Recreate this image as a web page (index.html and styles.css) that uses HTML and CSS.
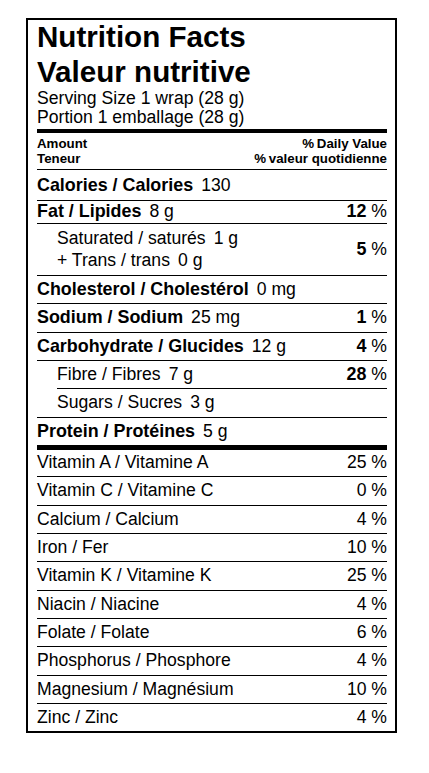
FILE: index.html
```html
<!DOCTYPE html>
<html lang="en">
<head>
  <meta charset="UTF-8">
  <title>Nutrition Facts - Valeur nutritive</title>
  <link rel="stylesheet" href="styles.css">
</head>
<body>

  <!-- Nutrition Facts table -->
  <div class="label">

    <!-- Title & serving -->
    <div class="head">
      <h1>Nutrition Facts<br>Valeur nutritive</h1>
      <p class="serving">Serving Size 1 wrap (28 g)<br>Portion 1 emballage (28 g)</p>
    </div>

    <div class="colhead">
      <div>Amount<br>Teneur</div>
      <div class="right">%&thinsp;Daily Value<br>%&thinsp;valeur quotidienne</div>
    </div>

    <!-- Nutrients -->
    <div class="row calories">
      <span><b>Calories / Calories</b><span class="amt">130</span></span>
    </div>
    <div class="row fat">
      <span><b>Fat / Lipides</b><span class="amt">8 g</span></span>
      <span class="dv"><b>12</b> %</span>
    </div>
    <div class="row sub double">
      <span>Saturated / saturés<span class="amt">1 g</span><br>+ Trans / trans<span class="amt">0 g</span></span>
      <span class="dv"><b>5</b> %</span>
    </div>
    <div class="row">
      <span><b>Cholesterol / Cholestérol</b><span class="amt">0 mg</span></span>
    </div>
    <div class="row">
      <span><b>Sodium / Sodium</b><span class="amt">25 mg</span></span>
      <span class="dv"><b>1</b> %</span>
    </div>
    <div class="row">
      <span><b>Carbohydrate / Glucides</b><span class="amt">12 g</span></span>
      <span class="dv"><b>4</b> %</span>
    </div>
    <div class="row sub">
      <span>Fibre / Fibres<span class="amt">7 g</span></span>
      <span class="dv"><b>28</b> %</span>
    </div>
    <div class="row sub nested">
      <span>Sugars / Sucres<span class="amt">3 g</span></span>
    </div>
    <div class="row">
      <span><b>Protein / Protéines</b><span class="amt">5 g</span></span>
    </div>

    <!-- Vitamins & minerals -->
    <div class="vitamins">
      <div class="row"><span>Vitamin A / Vitamine A</span><span class="dv">25 %</span></div>
      <div class="row"><span>Vitamin C / Vitamine C</span><span class="dv">0 %</span></div>
      <div class="row"><span>Calcium / Calcium</span><span class="dv">4 %</span></div>
      <div class="row"><span>Iron / Fer</span><span class="dv">10 %</span></div>
      <div class="row"><span>Vitamin K / Vitamine K</span><span class="dv">25 %</span></div>
      <div class="row"><span>Niacin / Niacine</span><span class="dv">4 %</span></div>
      <div class="row"><span>Folate / Folate</span><span class="dv">6 %</span></div>
      <div class="row"><span>Phosphorus / Phosphore</span><span class="dv">4 %</span></div>
      <div class="row"><span>Magnesium / Magnésium</span><span class="dv">10 %</span></div>
      <div class="row"><span>Zinc / Zinc</span><span class="dv">4 %</span></div>
    </div>
  </div>

</body>
</html>
```

FILE: styles.css
```css
/* Global */
body {
  margin: 0;
  background: #fff;
  color: #000;
  font-family: "Liberation Sans", Arial, sans-serif;
}
.label {
  width: 350px;
  margin: 18px 0 0 26px;
  padding: 0 8px 0 9px;
  border: 2px solid #000;
}
/* Title block */
.head {
  padding-bottom: 3px;
  border-bottom: 4px solid #000;
}
.head h1 {
  margin: 0;
  font-size: 29.6px;
  line-height: 34.5px;
  font-weight: bold;
}
.serving {
  margin: 0;
  font-size: 17.6px;
  line-height: 18.5px;
}
.colhead {
  display: flex;
  justify-content: space-between;
  padding: 3px 0;
  border-bottom: 1px solid #000;
  font-size: 13.3px;
  line-height: 15px;
  font-weight: bold;
}
.colhead .right {
  text-align: right;
}
/* Rows */
.row {
  display: flex;
  justify-content: space-between;
  align-items: center;
  padding: 3px 0 4px;
  border-top: 1px solid #000;
  font-size: 17.6px;
  line-height: 20.33px;
}
.row b {
  font-size: 17.9px;
}
.row.calories {
  border-top: none;
  padding: 5px 0 5px;
}
.row.fat {
  padding: 0 0 1.5px;
}
.row.double {
  padding: 3px 0 4px 20px;
  line-height: 22px;
}
.row.sub {
  padding-left: 20px;
}
.row.sub.nested {
  margin-left: 20px;
  padding-left: 0;
}
.amt {
  margin-left: 8px;
}
.vitamins {
  border-top: 5px solid #000;
}
.vitamins .row:first-child {
  border-top: none;
  padding-top: 2px;
}
```
